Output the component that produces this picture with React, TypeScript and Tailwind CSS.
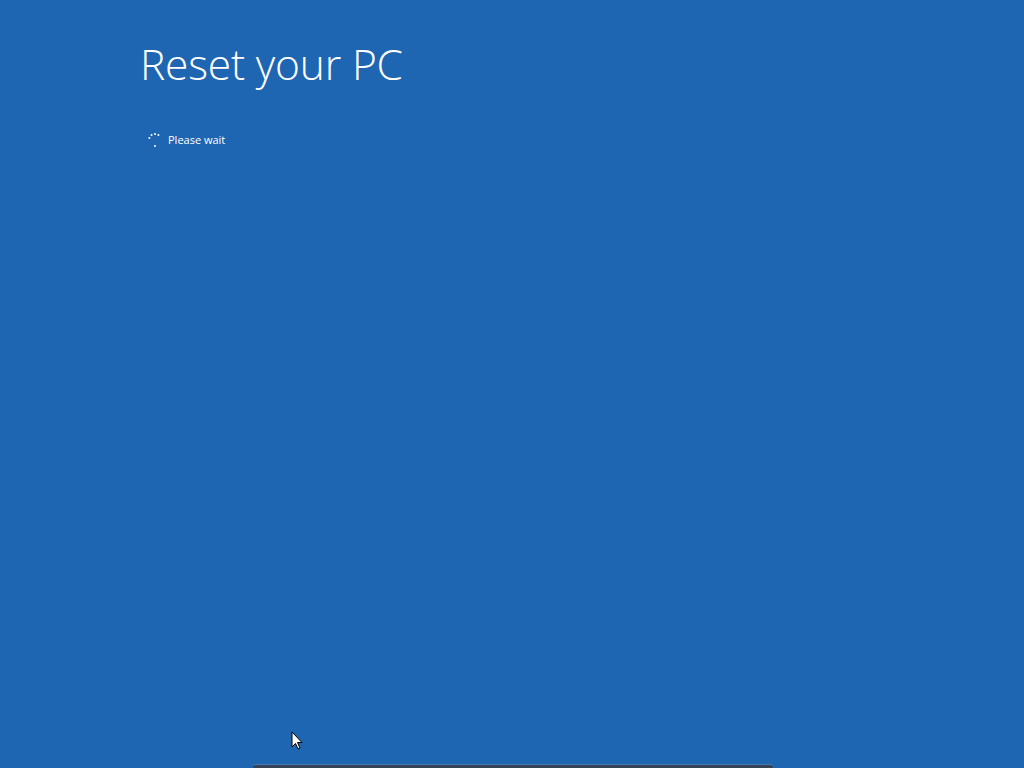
export default function App() {
  const dots = [200, 235, 270, 305, 90];
  return (
    <div className="w-[1024px] h-[768px] bg-[#1f66b2] overflow-hidden flex flex-col relative" style={{ fontFamily: '"Open Sans", "Noto Sans", sans-serif' }}>
      <div className="pl-[140px] pt-[35px]">
        <h1 className="text-[42.5px] leading-[58px] font-light text-white tracking-[-0.2px]">Reset your PC</h1>
        <div className="flex items-center gap-[5px] mt-[39px] pl-[7px]">
          <svg width="16" height="16" viewBox="0 0 16 16">
            {dots.map((a, i) => (
              <circle key={i} cx={8 + 6 * Math.cos((a * Math.PI) / 180)} cy={8 + 6 * Math.sin((a * Math.PI) / 180)} r="1" fill="#ffffff" />
            ))}
          </svg>
          <span className="text-[11px] text-white">Please wait</span>
        </div>
      </div>
      <div className="flex-1" />
      <div className="w-[520px] h-[4px] bg-[#34455a] rounded-t-[3px] border-t border-[#4a7ab0] ml-[253px]" />
      <svg className="absolute left-[291px] top-[731px]" width="12" height="19" viewBox="0 0 12 19">
        <path d="M1 1 L1 16 L4.5 12.5 L7 18 L9 17 L6.5 11.5 L11 11.5 Z" fill="#ffffff" stroke="#000000" strokeWidth="1" />
      </svg>
    </div>
  );
}
